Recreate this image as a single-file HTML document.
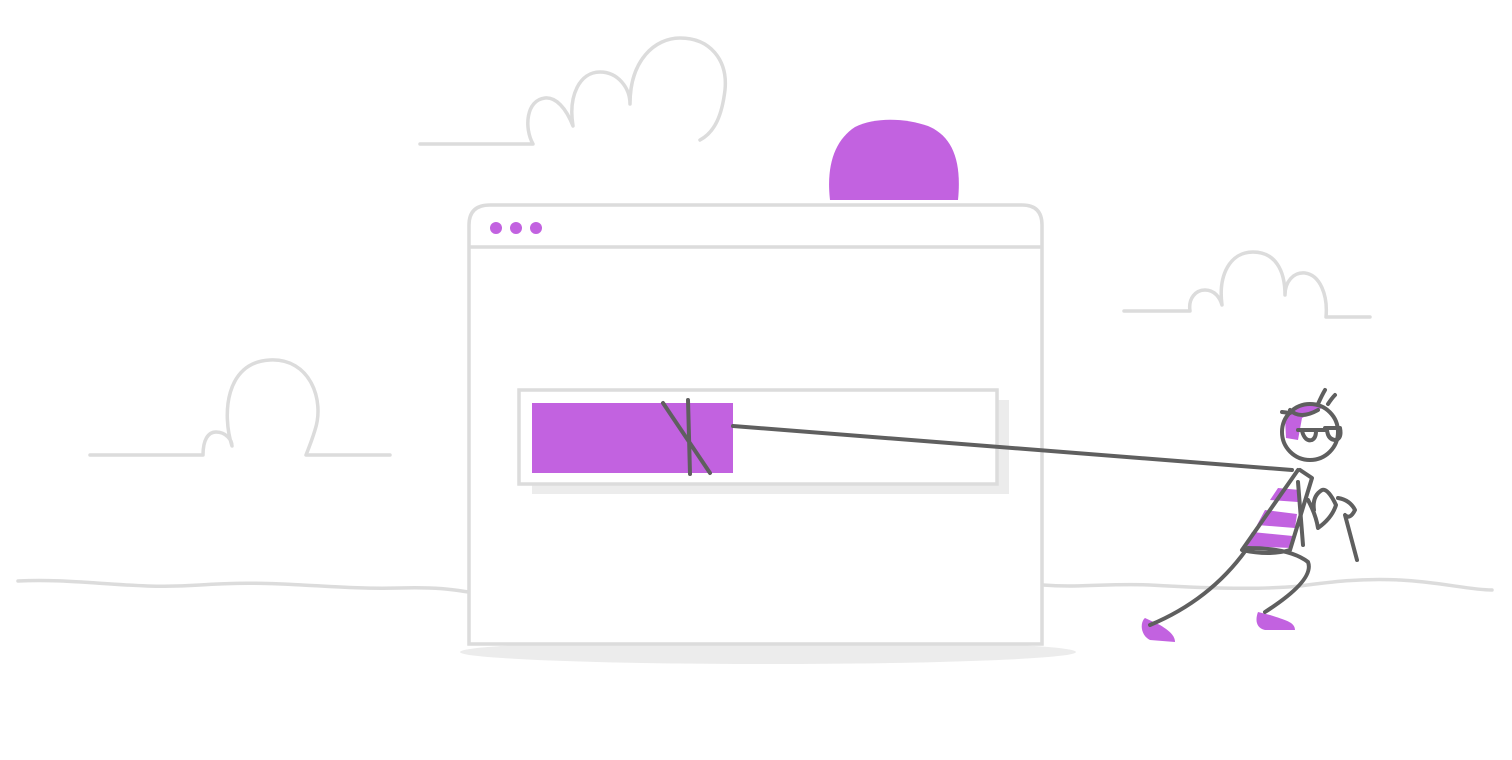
<!DOCTYPE html>
<html><head><meta charset="utf-8"><style>html,body{margin:0;padding:0;background:#fff}svg{display:block}</style></head>
<body>
<svg width="1512" height="760" viewBox="0 0 1512 760" xmlns="http://www.w3.org/2000/svg">
<g fill="none" stroke="#dcdcdc" stroke-width="3.5" stroke-linecap="round" stroke-linejoin="round">
<path d="M420 144 H533 C524 128 526 100 545 98 C556 97 566 108 573 126 C568 95 580 72 600 72 C618 72 630 88 630 104 C630 60 655 38 680 38 C710 38 728 60 725 90 C722 115 715 132 700 140"/>
<path d="M90 455 H203 C203 440 208 432 216 432 C226 432 232 440 232 446 C222 415 225 362 270 360 C310 358 325 400 315 430 C312 440 308 450 306 455 H390"/>
<path d="M1124 311 H1190 C1188 298 1196 290 1205 290 C1215 290 1220 298 1222 305 C1218 275 1230 252 1253 252 C1275 252 1285 270 1285 295 C1285 282 1293 272 1305 273 C1320 275 1328 295 1326 317 H1370"/>
<path d="M18 581 C80 578 130 590 200 585 C280 579 330 590 400 588 C440 587 455 590 468 592"/>
<path d="M1043 585 C1080 588 1110 583 1150 585 C1200 588 1260 590 1300 586 C1330 582 1360 578 1400 580 C1440 582 1470 590 1492 590"/>
</g>
<path d="M830 200 C826 165 835 140 855 127 C875 117 905 118 928 126 C952 136 962 160 958 200 Z" fill="#c262e0"/>
<ellipse cx="768" cy="652" rx="308" ry="12" fill="#ececec"/>
<path d="M469 644 V225 Q469 205 490 205 H1022 Q1042 205 1042 225 V644 Z" fill="#fff" stroke="#dcdcdc" stroke-width="3.5"/>
<line x1="470" y1="247" x2="1041" y2="247" stroke="#dcdcdc" stroke-width="3.5"/>
<circle cx="496" cy="228" r="6" fill="#c262e0"/>
<circle cx="516" cy="228" r="6" fill="#c262e0"/>
<circle cx="536" cy="228" r="6" fill="#c262e0"/>
<rect x="532" y="400" width="477" height="94" fill="#ececec"/>
<rect x="519" y="390" width="478" height="94" fill="#fff" stroke="#dcdcdc" stroke-width="3.5"/>
<rect x="532" y="403" width="201" height="70" fill="#c262e0"/>
<g stroke="#5f5f5f" stroke-width="4" stroke-linecap="round" fill="none">
<path d="M663 403 L710 473 M688 400 L690 474"/>
<path d="M733 426 L1292 470"/>
</g>
<g stroke-linecap="round" stroke-linejoin="round">
<path d="M1285 418 C1290 405 1305 402 1322 408 L1302 418 L1298 440 L1286 438 Z" fill="#c262e0"/>
<path d="M1278 488 L1300 490 L1298 502 L1270 500 Z M1265 510 L1297 514 L1295 528 L1257 525 Z M1252 532 L1293 536 L1292 548 L1244 546 Z" fill="#c262e0"/>
<path d="M1145 618 C1140 622 1140 635 1150 640 L1175 642 C1175 635 1168 630 1160 625 Z" fill="#c262e0"/>
<path d="M1258 612 C1255 620 1256 628 1265 630 L1295 630 C1295 622 1285 620 1270 615 Z" fill="#c262e0"/>
<g fill="none" stroke="#5f5f5f" stroke-width="4">
<circle cx="1310" cy="432" r="28"/>
<path d="M1282 412 L1290 413 M1290 410 Q1300 420 1318 410 M1318 404 Q1322 395 1325 390 M1328 404 Q1332 398 1335 395"/>
<path d="M1298 430 H1325 M1302 431 Q1305 442 1312 440 Q1316 438 1316 431 M1325 428 H1340 Q1342 438 1336 440 Q1328 440 1327 430"/>
<path d="M1298 470 Q1270 510 1242 550 Q1270 556 1290 550 L1312 478 L1300 470"/>
<path d="M1298 482 L1303 545"/>
<path d="M1308 500 Q1316 515 1318 528 Q1332 518 1336 505 Q1328 488 1322 490 Q1312 496 1314 510"/>
<path d="M1338 498 Q1350 500 1355 510 Q1350 520 1345 515 L1357 560"/>
<path d="M1246 550 Q1210 600 1150 625"/>
<path d="M1248 548 Q1290 548 1308 562 Q1315 580 1265 612"/>
</g>
</g>
</svg>
</body></html>
